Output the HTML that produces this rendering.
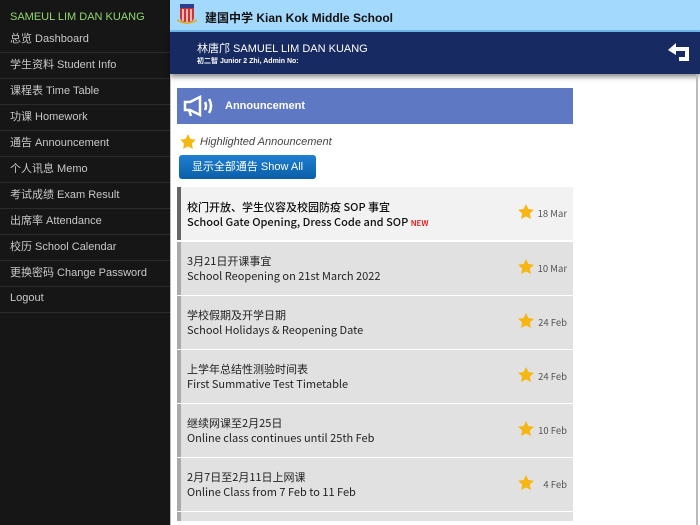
<!DOCTYPE html>
<html><head><meta charset="utf-8"><style>
*{margin:0;padding:0;box-sizing:border-box}
body{width:700px;height:525px;overflow:hidden;background:#fff;font-family:"Liberation Sans","Noto Sans CJK SC",sans-serif;position:relative}
#side{position:absolute;left:0;top:0;width:170px;height:525px;background:#161616;color:#c8c8c8;font-size:11px}
#side .n{height:27px;line-height:34px;padding-left:10px;color:#8fd86b}
#side .i{height:26px;line-height:25px;padding-left:10px;border-bottom:1px solid #2b2b2b}
#top{position:absolute;left:170px;top:0;width:530px;height:32px;background:#a3d9fd;border-bottom:2px solid #6fb8ee}
#top span{position:absolute;left:35px;top:9px;font-size:12px;font-weight:bold;color:#111}
#nav{position:absolute;left:170px;top:32px;width:530px;height:42px;background:#172a61;color:#fff;box-shadow:0 3px 5px rgba(0,0,0,.45)}
#main{position:absolute;left:170px;top:74px;width:528px;height:451px;border-left:1px solid #bbb;border-right:2px solid #bbb}
.ann{position:absolute;left:6px;top:14px;width:396px;height:36px;background:#5e78c4;color:#fff;font-weight:bold;font-size:11px}
.row{position:absolute;left:6px;width:396px;height:53px;background:#e1e1e1;border-left:4px solid #aaa;font-family:"Noto Sans CJK SC",sans-serif}
.row .t{position:absolute;left:6px;top:12px;font-size:11px;line-height:15px;color:#222}
.row .d{position:absolute;right:6px;top:19px;font-size:9.5px;color:#555}
.row svg{position:absolute;right:38px;top:16px}
</style></head><body>
<div id="side">
<div class="n">SAMEUL LIM DAN KUANG</div>
<div class="i">总览 Dashboard</div>
<div class="i">学生资料 Student Info</div>
<div class="i">课程表 Time Table</div>
<div class="i">功课 Homework</div>
<div class="i">通告 Announcement</div>
<div class="i">个人讯息 Memo</div>
<div class="i">考试成绩 Exam Result</div>
<div class="i">出席率 Attendance</div>
<div class="i">校历 School Calendar</div>
<div class="i">更换密码 Change Password</div>
<div class="i" style="line-height:22px">Logout</div>
</div>
<div id="top">
<svg style="position:absolute;left:7px;top:3px" width="20" height="22"><rect x="3" y="1" width="14" height="4" fill="#2a3f8f"/><path d="M3 5h14v9q0 5-7 6q-7-1-7-6z" fill="#c33"/><path d="M6 6v12M10 6v14M14 6v12" stroke="#fff" stroke-width="1.3"/><path d="M0 17q10 6 20 0" stroke="#d8b23a" stroke-width="2" fill="none"/></svg>
<span>建国中学 Kian Kok Middle School</span></div>
<div id="nav">
<div style="position:absolute;left:27px;top:8px;font-size:11px">林唐邝 SAMUEL LIM DAN KUANG</div>
<div style="position:absolute;left:27px;top:24px;font-size:7px;font-weight:bold">初二智 Junior 2 Zhi, Admin No:</div>
<svg style="position:absolute;left:496px;top:10px" width="26" height="22"><path d="M2 8l8-7v4h13v14h-10v-4h6v-6h-9v4z" fill="#fff"/></svg>
</div>
<div id="main">
<div class="ann"><svg style="position:absolute;left:5px;top:6px" width="32" height="24" fill="none" stroke="#fff" stroke-width="2.5"><path d="M3 8h5l10-5v18l-10-5h-5z"/><path d="M7 16l2 6"/><path d="M23 8q2 4 0 8M27 5q4 7 0 14"/></svg><span style="position:absolute;left:48px;top:12px">Announcement</span></div>
<svg style="position:absolute;left:8px;top:59px" width="18" height="18"><path d="M9 1l2.4 5 5.5.7-4 3.8 1 5.5L9 13.4 4.1 16l1-5.5-4-3.8 5.5-.7z" fill="#f6b613"/></svg>
<div style="position:absolute;left:29px;top:62px;font-size:11px;font-style:italic;color:#444">Highlighted Announcement</div>
<div style="position:absolute;left:8px;top:81px;width:137px;height:24px;background:linear-gradient(#1f7fd0,#0a5ea8);border-radius:3px;color:#fff;font-size:11px;line-height:24px;text-align:center">显示全部通告 Show All</div>
<div class="row" style="top:113px;background:#f2f2f2;border-left-color:#666"><div class="t" style="top:13px;font-weight:500;color:#111">校门开放、学生仪容及校园防疫 SOP 事宜<br>School Gate Opening, Dress Code and SOP <span style="color:#e00;font-size:8px">NEW</span></div><svg width="18" height="18"><path d="M9 1l2.4 5 5.5.7-4 3.8 1 5.5L9 13.4 4.1 16l1-5.5-4-3.8 5.5-.7z" fill="#f6b613"/></svg><div class="d">18 Mar</div></div>
<div class="row" style="top:168px"><div class="t">3月21日开课事宜<br>School Reopening on 21st March 2022</div><svg width="18" height="18"><path d="M9 1l2.4 5 5.5.7-4 3.8 1 5.5L9 13.4 4.1 16l1-5.5-4-3.8 5.5-.7z" fill="#f6b613"/></svg><div class="d">10 Mar</div></div>
<div class="row" style="top:222px"><div class="t">学校假期及开学日期<br>School Holidays &amp; Reopening Date</div><svg width="18" height="18"><path d="M9 1l2.4 5 5.5.7-4 3.8 1 5.5L9 13.4 4.1 16l1-5.5-4-3.8 5.5-.7z" fill="#f6b613"/></svg><div class="d">24 Feb</div></div>
<div class="row" style="top:276px"><div class="t">上学年总结性测验时间表<br>First Summative Test Timetable</div><svg width="18" height="18"><path d="M9 1l2.4 5 5.5.7-4 3.8 1 5.5L9 13.4 4.1 16l1-5.5-4-3.8 5.5-.7z" fill="#f6b613"/></svg><div class="d">24 Feb</div></div>
<div class="row" style="top:330px"><div class="t">继续网课至2月25日<br>Online class continues until 25th Feb</div><svg width="18" height="18"><path d="M9 1l2.4 5 5.5.7-4 3.8 1 5.5L9 13.4 4.1 16l1-5.5-4-3.8 5.5-.7z" fill="#f6b613"/></svg><div class="d">10 Feb</div></div>
<div class="row" style="top:384px"><div class="t">2月7日至2月11日上网课<br>Online Class from 7 Feb to 11 Feb</div><svg width="18" height="18"><path d="M9 1l2.4 5 5.5.7-4 3.8 1 5.5L9 13.4 4.1 16l1-5.5-4-3.8 5.5-.7z" fill="#f6b613"/></svg><div class="d">4 Feb</div></div>
<div class="row" style="top:438px;height:9px"></div>
</div>
</body></html>
